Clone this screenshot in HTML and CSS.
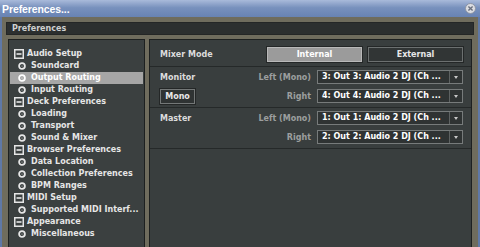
FILE: index.html
```
<!DOCTYPE html>
<html lang="en">
<head>
    <meta charset="UTF-8">
    <title>Preferences...</title>
    <link rel="stylesheet" href="styles.css">
</head>
<body>

    <svg class="defs" width="0" height="0">
        <symbol id="minus-box" viewBox="0 0 10 10">
            <rect x="0.75" y="0.75" width="8.5" height="8.5" fill="none" stroke="currentColor" stroke-width="1.5"/>
            <line x1="2.5" y1="5" x2="7.5" y2="5" stroke="currentColor" stroke-width="1.6"/>
        </symbol>
        <symbol id="ring" viewBox="0 0 8 8">
            <circle cx="4" cy="4" r="2.9" fill="none" stroke="currentColor" stroke-width="1.8"/>
            <circle cx="4" cy="4" r="0.5" fill="currentColor"/>
        </symbol>
    </svg>

    <div class="window">
        <div class="titlebar">
            <span class="title">Preferences...</span>
            <span class="close">
                <svg width="11" height="11" viewBox="0 0 11 11">
                    <circle cx="5.5" cy="5.5" r="5" fill="#dcdee3" stroke="#8b93a3" stroke-width="1"/>
                    <path d="M3.4 3.4 L7.6 7.6 M7.6 3.4 L3.4 7.6" stroke="#6a707e" stroke-width="1.4"/>
                </svg>
            </span>
        </div>

        <div class="frame">
            <div class="header">Preferences</div>

            <div class="panes">
                <!-- category tree -->
                <ul class="tree">
                    <li class="cat"><svg class="ico-box"><use href="#minus-box"/></svg>Audio Setup</li>
                    <li class="item"><svg class="ico-ring"><use href="#ring"/></svg>Soundcard</li>
                    <li class="item selected"><svg class="ico-ring"><use href="#ring"/></svg>Output Routing</li>
                    <li class="item"><svg class="ico-ring"><use href="#ring"/></svg>Input Routing</li>
                    <li class="cat"><svg class="ico-box"><use href="#minus-box"/></svg>Deck Preferences</li>
                    <li class="item"><svg class="ico-ring"><use href="#ring"/></svg>Loading</li>
                    <li class="item"><svg class="ico-ring"><use href="#ring"/></svg>Transport</li>
                    <li class="item"><svg class="ico-ring"><use href="#ring"/></svg>Sound &amp; Mixer</li>
                    <li class="cat"><svg class="ico-box"><use href="#minus-box"/></svg>Browser Preferences</li>
                    <li class="item"><svg class="ico-ring"><use href="#ring"/></svg>Data Location</li>
                    <li class="item"><svg class="ico-ring"><use href="#ring"/></svg>Collection Preferences</li>
                    <li class="item"><svg class="ico-ring"><use href="#ring"/></svg>BPM Ranges</li>
                    <li class="cat"><svg class="ico-box"><use href="#minus-box"/></svg>MIDI Setup</li>
                    <li class="item"><svg class="ico-ring"><use href="#ring"/></svg>Supported MIDI Interf...</li>
                    <li class="cat"><svg class="ico-box"><use href="#minus-box"/></svg>Appearance</li>
                    <li class="item"><svg class="ico-ring"><use href="#ring"/></svg>Miscellaneous</li>
                </ul>

                <!-- output routing settings -->
                <div class="settings">
                    <div class="section mode">
                        <span class="label">Mixer Mode</span>
                        <div class="toggle">
                            <button class="on">Internal</button>
                            <button>External</button>
                        </div>
                    </div>

                    <div class="section">
                        <div class="line">
                            <span class="label">Monitor</span>
                            <span class="sub">Left (Mono)</span>
                            <div class="select"><span class="value">3: Out 3: Audio 2 DJ (Ch ...</span><span class="arrow"></span></div>
                        </div>
                        <div class="line">
                            <button class="mono">Mono</button>
                            <span class="sub">Right</span>
                            <div class="select"><span class="value">4: Out 4: Audio 2 DJ (Ch ...</span><span class="arrow"></span></div>
                        </div>
                    </div>

                    <div class="section">
                        <div class="line">
                            <span class="label">Master</span>
                            <span class="sub">Left (Mono)</span>
                            <div class="select"><span class="value">1: Out 1: Audio 2 DJ (Ch ...</span><span class="arrow"></span></div>
                        </div>
                        <div class="line">
                            <span class="label"></span>
                            <span class="sub">Right</span>
                            <div class="select"><span class="value">2: Out 2: Audio 2 DJ (Ch ...</span><span class="arrow"></span></div>
                        </div>
                    </div>
                </div>
            </div>
        </div>
    </div>

</body>
</html>
```

FILE: styles.css
```
body {
    margin: 0;
    width: 480px;
    height: 247px;
    overflow: hidden;
    background-color: #6f6c5d;
    font-family: "DejaVu Sans", Verdana, sans-serif;
    font-size: 8px;
    font-weight: bold;
}
.defs {
    position: absolute;
}
.window {
    height: 247px;
    border-left: 2px solid #5f78a6;
    border-right: 2px solid #5f78a6;
    box-sizing: border-box;
}
.titlebar {
    height: 17px;
    display: flex;
    align-items: center;
    justify-content: space-between;
    padding: 0 2px 0 0;
    margin-left: -2px;
    margin-right: -2px;
    background: linear-gradient(#a9bada, #7891bd 45%, #6883b3);
}
.title {
    font-family: "Liberation Sans", Arial, sans-serif;
    font-size: 10.5px;
    color: white;
    padding-left: 2px;
    letter-spacing: -0.1px;
}
.close {
    display: flex;
    margin-right: 2px;
}
.frame {
    padding: 5px 4px 0 4px;
}
.header {
    height: 13px;
    box-sizing: border-box;
    padding-left: 5px;
    background-color: #2c2f2f;
    border: 1px solid #242626;
    color: #cfd0d0;
    line-height: 12px;
}
.panes {
    display: flex;
    gap: 4px;
    margin: 4px 2px 0 2px;
}
.tree {
    list-style: none;
    margin: 0;
    padding: 8px 1px 0 1px;
    width: 137px;
    height: 220px;
    box-sizing: border-box;
    background-color: #3b4040;
    border: 1px solid #1d2020;
    color: #e6e6e6;
}
.tree li {
    height: 12px;
    line-height: 12px;
    display: flex;
    align-items: center;
    white-space: nowrap;
}
.tree .cat {
    padding-left: 4px;
}
.tree .item {
    padding-left: 8px;
}
.tree .selected {
    background-color: #a6a6a6;
    color: white;
}
.ico-box {
    width: 10px;
    height: 10px;
    margin-right: 3px;
}
.ico-ring {
    width: 8px;
    height: 8px;
    margin-right: 5px;
}
.settings {
    flex: 1;
    height: 220px;
    box-sizing: border-box;
    background-color: #393e3e;
    border: 1px solid #1d2020;
}
.section {
    padding: 3px 8px 4px 10px;
    border-bottom: 1px solid #252929;
    display: flex;
    flex-direction: column;
    gap: 5px;
}
.section.mode {
    flex-direction: row;
    align-items: center;
    justify-content: space-between;
    padding-top: 7px;
}
.label {
    color: #dcdcdc;
}
.toggle {
    display: flex;
    gap: 6px;
}
button {
    font-family: inherit;
    font-size: 8px;
    font-weight: bold;
    color: #e8e8e8;
    margin: 0;
    padding: 0;
    cursor: pointer;
}
.toggle button {
    width: 95px;
    height: 15px;
    background-color: #313535;
    border: 1px solid #6c7070;
    box-shadow: 0 0 0 1px #242727;
}
.toggle button.on {
    background-color: #9b9b9b;
    border-color: #b9b9b9;
    color: white;
}
.line {
    display: flex;
    align-items: center;
    height: 14px;
}
.line .label {
    flex: 1;
}
.mono {
    height: 15px;
    width: 35px;
    background-color: #2f3333;
    border: 1px solid #747878;
    box-shadow: 0 0 0 1px #242727;
    margin-right: auto;
}
.sub {
    color: #9c9e9e;
    margin-right: 6px;
}
.select {
    width: 146px;
    height: 14px;
    box-sizing: border-box;
    display: flex;
    background-color: #2f3333;
    border: 1px solid #777b7b;
    color: white;
}
.select .value {
    flex: 1;
    padding-left: 4px;
    line-height: 12px;
    white-space: nowrap;
    overflow: hidden;
}
.select .arrow {
    width: 12px;
    border-left: 1px solid #5e6262;
    position: relative;
}
.select .arrow::after {
    content: "";
    position: absolute;
    left: 4px;
    top: 5px;
    border-left: 2px solid transparent;
    border-right: 2px solid transparent;
    border-top: 3px solid #c8c8c8;
}
```
